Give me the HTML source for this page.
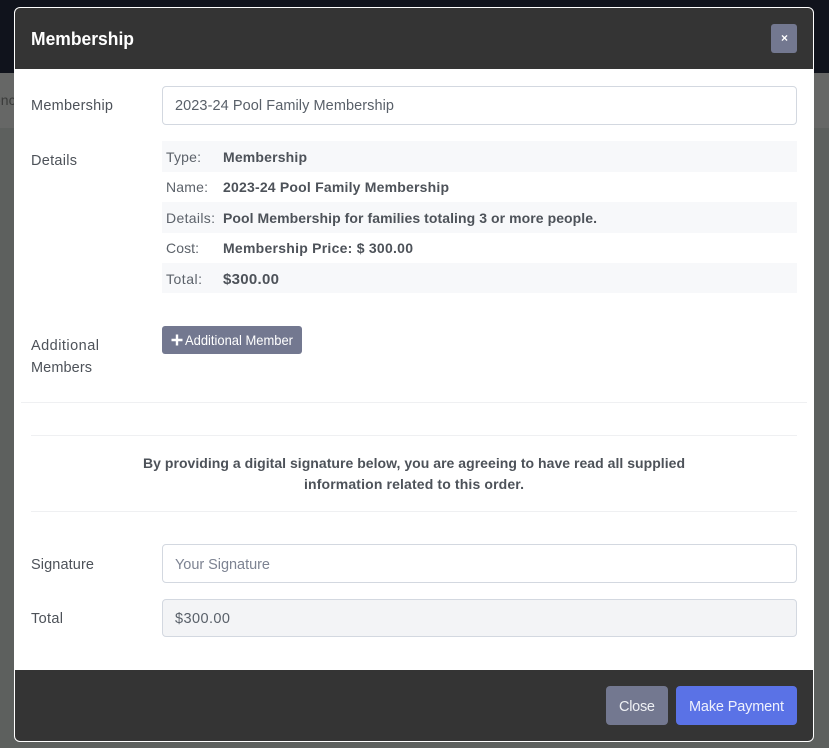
<!DOCTYPE html>
<html><head><meta charset="utf-8"><title>Membership</title>
<style>
html,body{margin:0;padding:0;width:829px;height:748px;overflow:hidden;background:#5d605e;font-family:"Liberation Sans",sans-serif}
div{position:absolute;box-sizing:border-box}
svg{position:absolute;left:0;top:0}
text{font-family:"Liberation Sans",sans-serif;font-size:14.5px;fill:#4d5259}
.b{font-weight:bold;font-size:14px}
.s{font-size:14px;fill:#5c626a}
.w{fill:#fff}
</style></head><body>
<div style="left:0;top:0;width:829px;height:73px;background:#10131c"></div>
<div style="left:0;top:73px;width:829px;height:55px;background:#666766"></div>
<div style="left:14px;top:7px;width:800px;height:735px;background:#fff;border:1px solid #fff;border-radius:6px;overflow:hidden">
  <div style="left:0;top:0;width:798px;height:61px;background:#343434"></div>
  <div style="left:0;top:662px;width:798px;height:71px;background:#343434"></div>
</div>
<div style="left:771px;top:24px;width:26px;height:29px;background:#737890;border-radius:3px"></div>
<div style="left:162px;top:86px;width:635px;height:39px;background:#fff;border:1px solid #d3d8e0;border-radius:4px"></div>
<div style="left:162px;top:141px;width:635px;height:31px;background:#f7f8fa"></div>
<div style="left:162px;top:202px;width:635px;height:31px;background:#f7f8fa"></div>
<div style="left:162px;top:263px;width:635px;height:30px;background:#f7f8fa"></div>
<div style="left:162px;top:326px;width:140px;height:28px;background:#737890;border-radius:3px"></div>
<div style="left:21px;top:402px;width:786px;height:1px;background:#eff0f2"></div>
<div style="left:31px;top:435px;width:766px;height:1px;background:#eff0f2"></div>
<div style="left:31px;top:511px;width:766px;height:1px;background:#eff0f2"></div>
<div style="left:162px;top:544px;width:635px;height:39px;background:#fff;border:1px solid #d3d8e0;border-radius:4px"></div>
<div style="left:162px;top:599px;width:635px;height:38px;background:#f3f4f6;border:1px solid #d3d8e0;border-radius:4px"></div>
<div style="left:606px;top:686px;width:62px;height:39px;background:#737890;border-radius:4px"></div>
<div style="left:676px;top:686px;width:121px;height:39px;background:#5a72e6;border-radius:4px"></div>
<svg width="14" height="748" viewBox="0 0 14 748" style="overflow:hidden">
  <text x="-7" y="105" style="font-size:14px;fill:#3a3b3a">enc</text>
</svg>
<svg width="829" height="748" viewBox="0 0 829 748">
  <text x="31" y="45" class="b w" style="font-size:18px" textLength="103" lengthAdjust="spacingAndGlyphs">Membership</text>
  <text x="781" y="42" class="b w" style="font-size:12px">×</text>
  <text x="31" y="110" textLength="82">Membership</text>
  <text x="175" y="110" style="fill:#596069" textLength="219">2023-24 Pool Family Membership</text>
  <text x="31" y="165" textLength="46">Details</text>
  <text x="166" y="162" class="s" textLength="35">Type:</text>
  <text x="223" y="162" class="b" textLength="84">Membership</text>
  <text x="166" y="192" class="s" textLength="42">Name:</text>
  <text x="223" y="192" class="b" textLength="226">2023-24 Pool Family Membership</text>
  <text x="166" y="223" class="s" textLength="49">Details:</text>
  <text x="223" y="223" class="b" textLength="374">Pool Membership for families totaling 3 or more people.</text>
  <text x="166" y="253" class="s" textLength="33">Cost:</text>
  <text x="223" y="253" class="b" textLength="190">Membership Price: $ 300.00</text>
  <text x="166" y="284" class="s" textLength="36">Total:</text>
  <text x="223" y="284" class="b" style="font-size:15px" textLength="56">$300.00</text>
  <text x="31" y="350" textLength="68">Additional</text>
  <text x="31" y="372" textLength="61">Members</text>
  <path d="M177 334.5v11M171.5 340h11" stroke="#fff" stroke-width="2.4" fill="none"/>
  <text x="185" y="345" class="w" style="font-size:14px" textLength="108" lengthAdjust="spacingAndGlyphs">Additional Member</text>
  <text x="143" y="468" class="b" textLength="542">By providing a digital signature below, you are agreeing to have read all supplied</text>
  <text x="304" y="489" class="b" textLength="220">information related to this order.</text>
  <text x="31" y="569" textLength="63">Signature</text>
  <text x="175" y="569" style="fill:#7d8392" textLength="95">Your Signature</text>
  <text x="31" y="623" textLength="32">Total</text>
  <text x="175" y="623" style="fill:#596069" textLength="55">$300.00</text>
  <text x="619" y="711" style="fill:#eef0f4" textLength="36">Close</text>
  <text x="689" y="711" style="fill:#eef1fd" textLength="95">Make Payment</text>
</svg>
</body></html>
